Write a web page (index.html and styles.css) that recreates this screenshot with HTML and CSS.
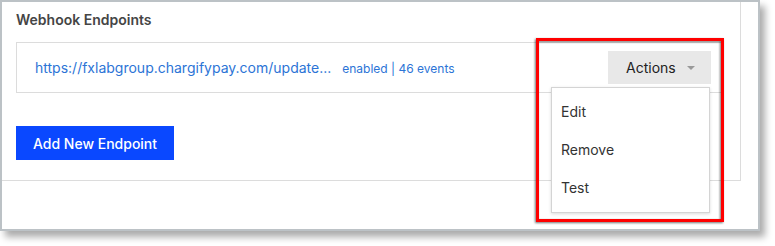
FILE: index.html
```html
<!DOCTYPE html>
<html>
<head>
<meta charset="utf-8">
<link rel="stylesheet" href="styles.css">
</head>
<body>
<div class="frame">
  <section class="panel">
    <h2 class="title">Webhook Endpoints</h2>
    <div class="card">
      <div class="info">
        <a class="url">https://fxlabgroup.chargifypay.com/update...</a>
        <span class="meta">enabled <span class="sep">|</span> 46 events</span>
      </div>
      <div class="actions">
        <button class="actions-btn">Actions <span class="caret"></span></button>
        <ul class="menu">
          <li>Edit</li>
          <li>Remove</li>
          <li>Test</li>
        </ul>
      </div>
    </div>
    <button class="add-btn">Add New Endpoint</button>
  </section>
  <div class="highlight"></div>
</div>
</body>
</html>
```

FILE: styles.css
```css
* { box-sizing: border-box; }
html, body { margin: 0; padding: 0; background: #fff; }
body {
  font-family: Inter, "Noto Sans", "Liberation Sans", sans-serif;
  width: 775px;
  height: 246px;
  overflow: hidden;
}
.frame {
  position: relative;
  width: 760px;
  height: 231px;
  border: 2px solid #bcc2c6;
  background: #fff;
  box-shadow: 5px 6px 7px rgba(0, 0, 0, 0.33);
}
.panel {
  width: 739px;
  border-right: 1px solid #dcdcdc;
  border-bottom: 1px solid #dcdcdc;
  padding: 10px 16px 20px 14px;
}
.title {
  margin: 0;
  font-size: 14px;
  line-height: 16px;
  font-weight: 600;
  color: #454545;
}
.card {
  margin-top: 14px;
  border: 1px solid #dcdcdc;
  display: flex;
  align-items: center;
  justify-content: space-between;
  padding: 8px 12px 8px 18px;
}
.info { display: flex; align-items: baseline; gap: 11px; }
.url {
  font-size: 14px;
  color: #2c74d6;
  text-decoration: none;
}
.meta {
  font-size: 12px;
  color: #2c74d6;
}
.sep { color: #2c74d6; }
.actions { position: relative; }
.actions-btn {
  display: flex;
  align-items: center;
  gap: 11px;
  height: 33px;
  width: 103px;
  padding: 0 0 0 18px;
  border: 0;
  background: #e8e8e8;
  font-family: inherit;
  font-size: 14px;
  color: #222;
}
.caret {
  width: 0;
  height: 0;
  border-left: 4px solid transparent;
  border-right: 4px solid transparent;
  border-top: 4px solid #999;
}
.menu {
  position: absolute;
  top: 36px;
  right: 1px;
  width: 159px;
  margin: 0;
  padding: 5px 0;
  list-style: none;
  background: #fff;
  border: 1px solid #d4d4d4;
  box-shadow: 0 1px 3px rgba(0, 0, 0, 0.15);
  z-index: 2;
}
.menu li {
  height: 38px;
  line-height: 38px;
  padding-left: 9px;
  font-size: 14px;
  color: #333;
}
.add-btn {
  display: block;
  margin-top: 33px;
  width: 158px;
  height: 34px;
  border: 0;
  background: #0a48ff;
  color: #fff;
  font-family: inherit;
  font-size: 14px;
  font-weight: 500;
}
.highlight {
  position: absolute;
  left: 534px;
  top: 36px;
  width: 188px;
  height: 184px;
  border: 3px solid #ff0000;
  filter: drop-shadow(-1px 1px 1px rgba(0, 0, 0, 0.55));
  z-index: 3;
}
```
